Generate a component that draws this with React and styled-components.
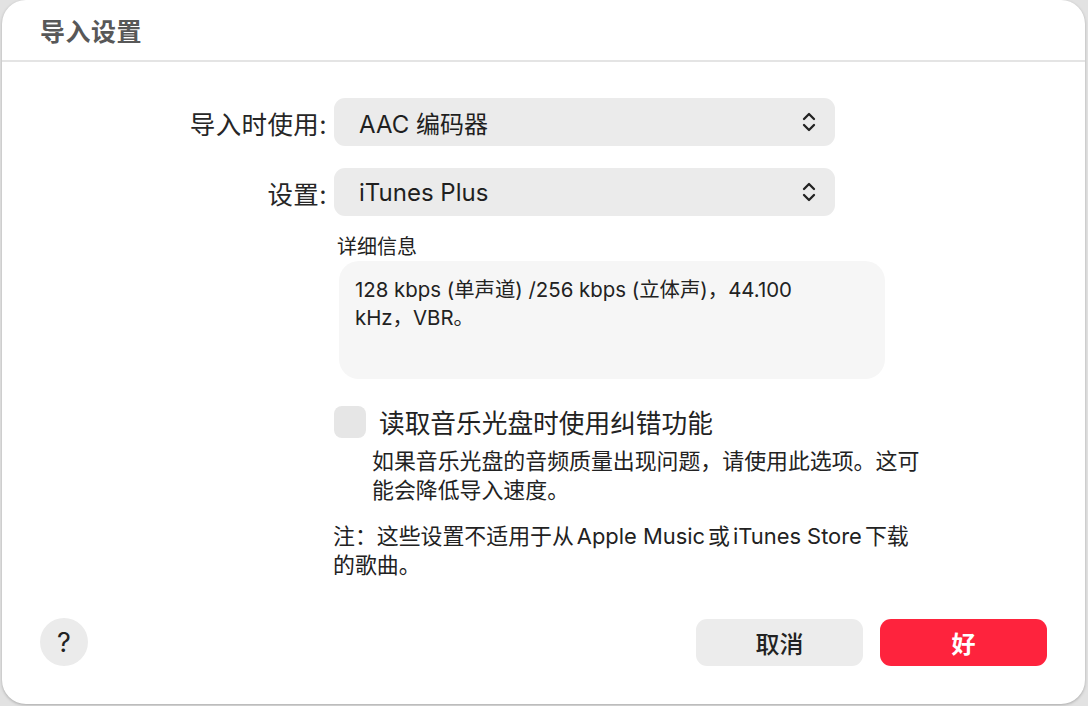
import styled, { createGlobalStyle } from 'styled-components';

const GlobalStyle = createGlobalStyle`
    html, body {
        margin: 0;
        padding: 0;
        height: 100%;
        background: #e2e2e2;
        font-family: "Inter", "Noto Sans CJK SC", sans-serif;
        color: #222;
    }
    #root {
        height: 100%;
    }
`

const Window = styled.div`
    box-sizing: border-box;
    height: calc(100vh - 2px);
    margin: 0 3px 0 2px;
    background: #fff;
    border-radius: 24px;
    box-shadow: 0 1px 3px rgba(0, 0, 0, 0.25);
    display: flex;
    flex-direction: column;
    overflow: hidden;
`

const Header = styled.header`
    height: 62px;
    border-bottom: 2px solid #e4e4e4;
    display: flex;
    align-items: center;
    padding-left: 38px;
    box-sizing: border-box;
`

const Title = styled.h1`
    margin: 0;
    font-size: 25px;
    font-weight: 700;
    color: #585858;
    letter-spacing: 0.5px;
`

const Form = styled.main`
    display: grid;
    grid-template-columns: 325px 501px;
    column-gap: 7px;
    row-gap: 22px;
    padding-top: 36px;
    align-items: center;
`

const Label = styled.label`
    text-align: right;
    font-size: 25.5px;
    letter-spacing: 0.4px;
    color: #262626;
`

const Select = styled.div`
    height: 48px;
    border-radius: 11px;
    background: #ebebeb;
    display: flex;
    align-items: center;
    justify-content: space-between;
    padding: 0 18px 0 25px;
    font-size: 24px;
    color: #1f1f1f;
`

const Column = styled.section`
    grid-column: 2;
    display: flex;
    flex-direction: column;
    margin-top: ${p => p.$top || 0}px;
`

const SmallTitle = styled.div`
    font-size: 20px;
    margin-left: 3px;
    line-height: 26px;
`

const DetailBox = styled.div`
    width: 546px;
    height: 118px;
    box-sizing: border-box;
    margin-left: 5px;
    margin-top: 1px;
    border-radius: 20px;
    background: #f6f6f6;
    padding: 15px 16px;
    font-size: 20.4px;
    line-height: 28px;
    color: #222;
`

const DetailText = styled.p`
    margin: 0;
    max-width: 465px;
`

const CheckRow = styled.div`
    display: flex;
    align-items: center;
    gap: 13px;
    margin-top: 24px;
`

const CheckBox = styled.div`
    width: 32px;
    height: 32px;
    border-radius: 8px;
    background: #e6e6e6;
`

const CheckLabel = styled.span`
    font-size: 25.7px;
    color: #222;
`

const Paragraph = styled.p`
    margin: ${p => p.$top}px 0 0 ${p => p.$left}px;
    width: ${p => p.$width}px;
    font-size: 21.9px;
    line-height: 29px;
    color: #222;
`

const Latin = styled.span`
    padding: 0 3px;
`

const Footer = styled.footer`
    margin-top: auto;
    display: flex;
    align-items: center;
    padding: 0 38px 38px 38px;
    gap: 17px;
`

const HelpButton = styled.button`
    width: 48px;
    height: 48px;
    border-radius: 50%;
    border: none;
    background: #ebebeb;
    font-family: inherit;
    font-size: 27px;
    color: #222;
    margin-right: auto;
    padding: 0;
`

const Button = styled.button`
    width: 167px;
    height: 47px;
    border-radius: 11px;
    border: none;
    font-family: inherit;
    font-size: 24px;
    background: ${p => (p.$primary ? '#fe233d' : '#ececec')};
    color: ${p => (p.$primary ? '#fff' : '#222')};
    font-weight: ${p => (p.$primary ? 600 : 500)};
`

const Chevrons = () => (
    <svg width="16" height="24" viewBox="0 0 16 24" fill="none" stroke="#222" strokeWidth="2.3" strokeLinecap="round" strokeLinejoin="round">
        <path d="M3 9 L8 4 L13 9" />
        <path d="M3 15 L8 20 L13 15" />
    </svg>
)

const App = () => {
    return (
        <>
            <GlobalStyle />
            <Window>
                <Header>
                    <Title>导入设置</Title>
                </Header>
                <Form>
                    <Label>导入时使用:</Label>
                    <Select>
                        <span>AAC 编码器</span>
                        <Chevrons />
                    </Select>
                    <Label>设置:</Label>
                    <Select>
                        <span>iTunes Plus</span>
                        <Chevrons />
                    </Select>
                    <Column $top={-4}>
                        <SmallTitle>详细信息</SmallTitle>
                        <DetailBox>
                            <DetailText>128 kbps (单声道) /256 kbps (立体声)，44.100 kHz，VBR。</DetailText>
                        </DetailBox>
                        <CheckRow>
                            <CheckBox />
                            <CheckLabel>读取音乐光盘时使用纠错功能</CheckLabel>
                        </CheckRow>
                        <Paragraph $top={7} $left={38} $width={556}>
                            如果音乐光盘的音频质量出现问题，请使用此选项。这可能会降低导入速度。
                        </Paragraph>
                        <Paragraph $top={17} $left={-1} $width={582}>
                            注：这些设置不适用于从<Latin>Apple Music</Latin>或<Latin>iTunes Store</Latin>下载的歌曲。
                        </Paragraph>
                    </Column>
                </Form>
                <Footer>
                    <HelpButton>?</HelpButton>
                    <Button>取消</Button>
                    <Button $primary>好</Button>
                </Footer>
            </Window>
        </>
    )
}

export default App;
